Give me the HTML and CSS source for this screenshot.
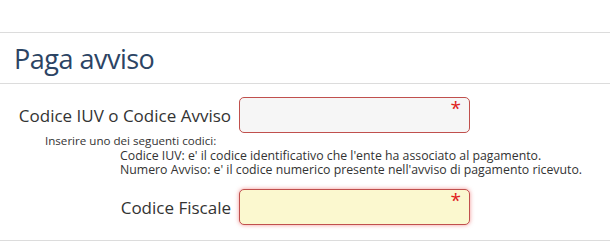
FILE: index.html
```html
<!DOCTYPE html>
<html lang="it">
<head>
<meta charset="utf-8">
<title>Paga avviso</title>
<link rel="stylesheet" href="styles.css">
</head>
<body>
<div class="top-space"></div>
<section class="panel">
  <div class="panel-head">
    <h1 class="title">Paga avviso</h1>
  </div>
  <form class="form">
    <div class="row">
      <label class="label" for="iuv">Codice IUV o Codice Avviso</label>
      <div class="field">
        <input id="iuv" class="input input-grey" type="text">
        <span class="req">*</span>
      </div>
    </div>
    <div class="help">
      <div class="help-intro">Inserire uno dei seguenti codici:</div>
      <div class="help-item">Codice IUV: e' il codice identificativo che l'ente ha associato al pagamento.</div>
      <div class="help-item">Numero Avviso: e' il codice numerico presente nell'avviso di pagamento ricevuto.</div>
    </div>
    <div class="row row-cf">
      <label class="label" for="cf">Codice Fiscale</label>
      <div class="field">
        <input id="cf" class="input input-yellow" type="text">
        <span class="req">*</span>
      </div>
    </div>
  </form>
</section>
</body>
</html>
```
FILE: styles.css
```css
html, body {
  margin: 0;
  padding: 0;
  background: #ffffff;
  font-family: "Open Sans", "Noto Sans", sans-serif;
  color: #333333;
}

.top-space {
  height: 32px;
}

.panel {
  border-top: 1px solid #dcdcdc;
  border-bottom: 1px solid #dcdcdc;
}

.panel-head {
  border-bottom: 1px solid #dcdcdc;
  padding: 8px 14px 7px;
}

.title {
  margin: 0;
  font-size: 27px;
  line-height: 35px;
  font-weight: 400;
  color: #2c4464;
  letter-spacing: -0.5px;
}

.form {
  padding: 13px 0 15px;
}

.row {
  display: flex;
  align-items: center;
  gap: 8px;
}

.label {
  width: 231px;
  text-align: right;
  font-size: 17px;
  color: #333333;
  flex: none;
}

.field {
  position: relative;
  width: 231px;
  height: 36px;
}

.input {
  box-sizing: border-box;
  width: 100%;
  height: 100%;
  margin: 0;
  border: 1px solid #c0504d;
  border-radius: 5px;
  outline: none;
  font: inherit;
}

.input-grey {
  background: #f6f6f6;
}

.input-yellow {
  background: #fbf8cf;
  box-shadow: 0 0 4px rgba(230, 60, 60, 0.55);
}

.req {
  position: absolute;
  top: 2px;
  right: 9px;
  color: #e02020;
  font-size: 19px;
  font-weight: 400;
  line-height: 19px;
}

.help {
  padding-top: 1px;
  color: #333333;
}

.help-intro {
  padding-left: 45px;
  font-size: 11.6px;
  line-height: 14px;
  margin-bottom: 1px;
}

.help-item {
  padding-left: 120px;
  font-size: 12.3px;
  line-height: 13.5px;
}

.row-cf {
  margin-top: 13px;
}
```
